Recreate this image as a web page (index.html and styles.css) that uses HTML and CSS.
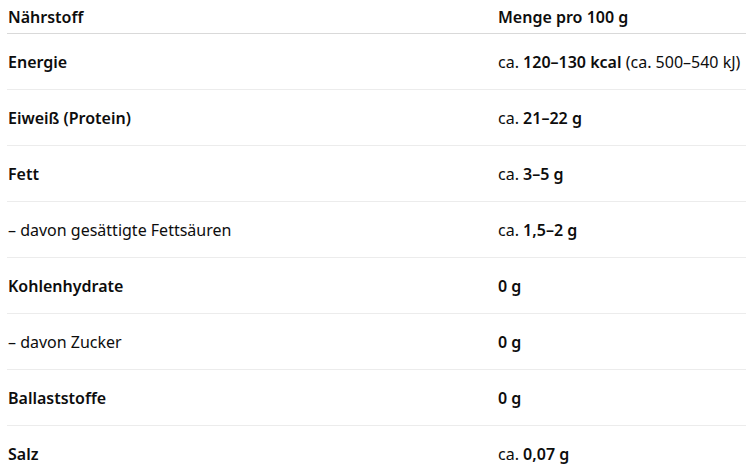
FILE: index.html
```html
<!DOCTYPE html>
<html lang="de">
<head>
<meta charset="utf-8">
<link rel="stylesheet" href="styles.css">
</head>
<body>
<div class="wrap">
<table class="nutri">
  <thead>
    <tr><th class="c1">Nährstoff</th><th class="c2">Menge pro 100 g</th></tr>
  </thead>
  <tbody>
    <tr><td class="c1"><b>Energie</b></td><td class="c2">ca. <b>120–130 kcal</b> (ca. 500–540 kJ)</td></tr>
    <tr><td class="c1"><b>Eiweiß (Protein)</b></td><td class="c2">ca. <b>21–22 g</b></td></tr>
    <tr><td class="c1"><b>Fett</b></td><td class="c2">ca. <b>3–5 g</b></td></tr>
    <tr><td class="c1">– davon gesättigte Fettsäuren</td><td class="c2">ca. <b>1,5–2 g</b></td></tr>
    <tr><td class="c1"><b>Kohlenhydrate</b></td><td class="c2"><b>0 g</b></td></tr>
    <tr><td class="c1">– davon Zucker</td><td class="c2"><b>0 g</b></td></tr>
    <tr><td class="c1"><b>Ballaststoffe</b></td><td class="c2"><b>0 g</b></td></tr>
    <tr><td class="c1"><b>Salz</b></td><td class="c2">ca. <b>0,07 g</b></td></tr>
  </tbody>
</table>
</div>
</body>
</html>
```
FILE: styles.css
```css
html, body {
  margin: 0;
  padding: 0;
  background: #ffffff;
  overflow: hidden;
}
body {
  font-family: "Noto Sans", "Open Sans", sans-serif;
  font-size: 16px;
  color: #0d0d0d;
}
.wrap {
  padding-left: 7px;
}
.nutri {
  border-collapse: collapse;
  width: 760px;
  table-layout: fixed;
}
.nutri th, .nutri td {
  text-align: left;
  white-space: nowrap;
  padding: 0;
  vertical-align: middle;
}
.nutri th {
  font-weight: 600;
  height: 33px;
  border-bottom: 1px solid #d9d9d9;
}
.nutri td {
  height: 55px;
  border-bottom: 1px solid #ececec;
}
.nutri b {
  font-weight: 600;
}
.c1 {
  width: 490px;
  padding-left: 1px !important;
}
.c2 {
  width: auto;
}
```
